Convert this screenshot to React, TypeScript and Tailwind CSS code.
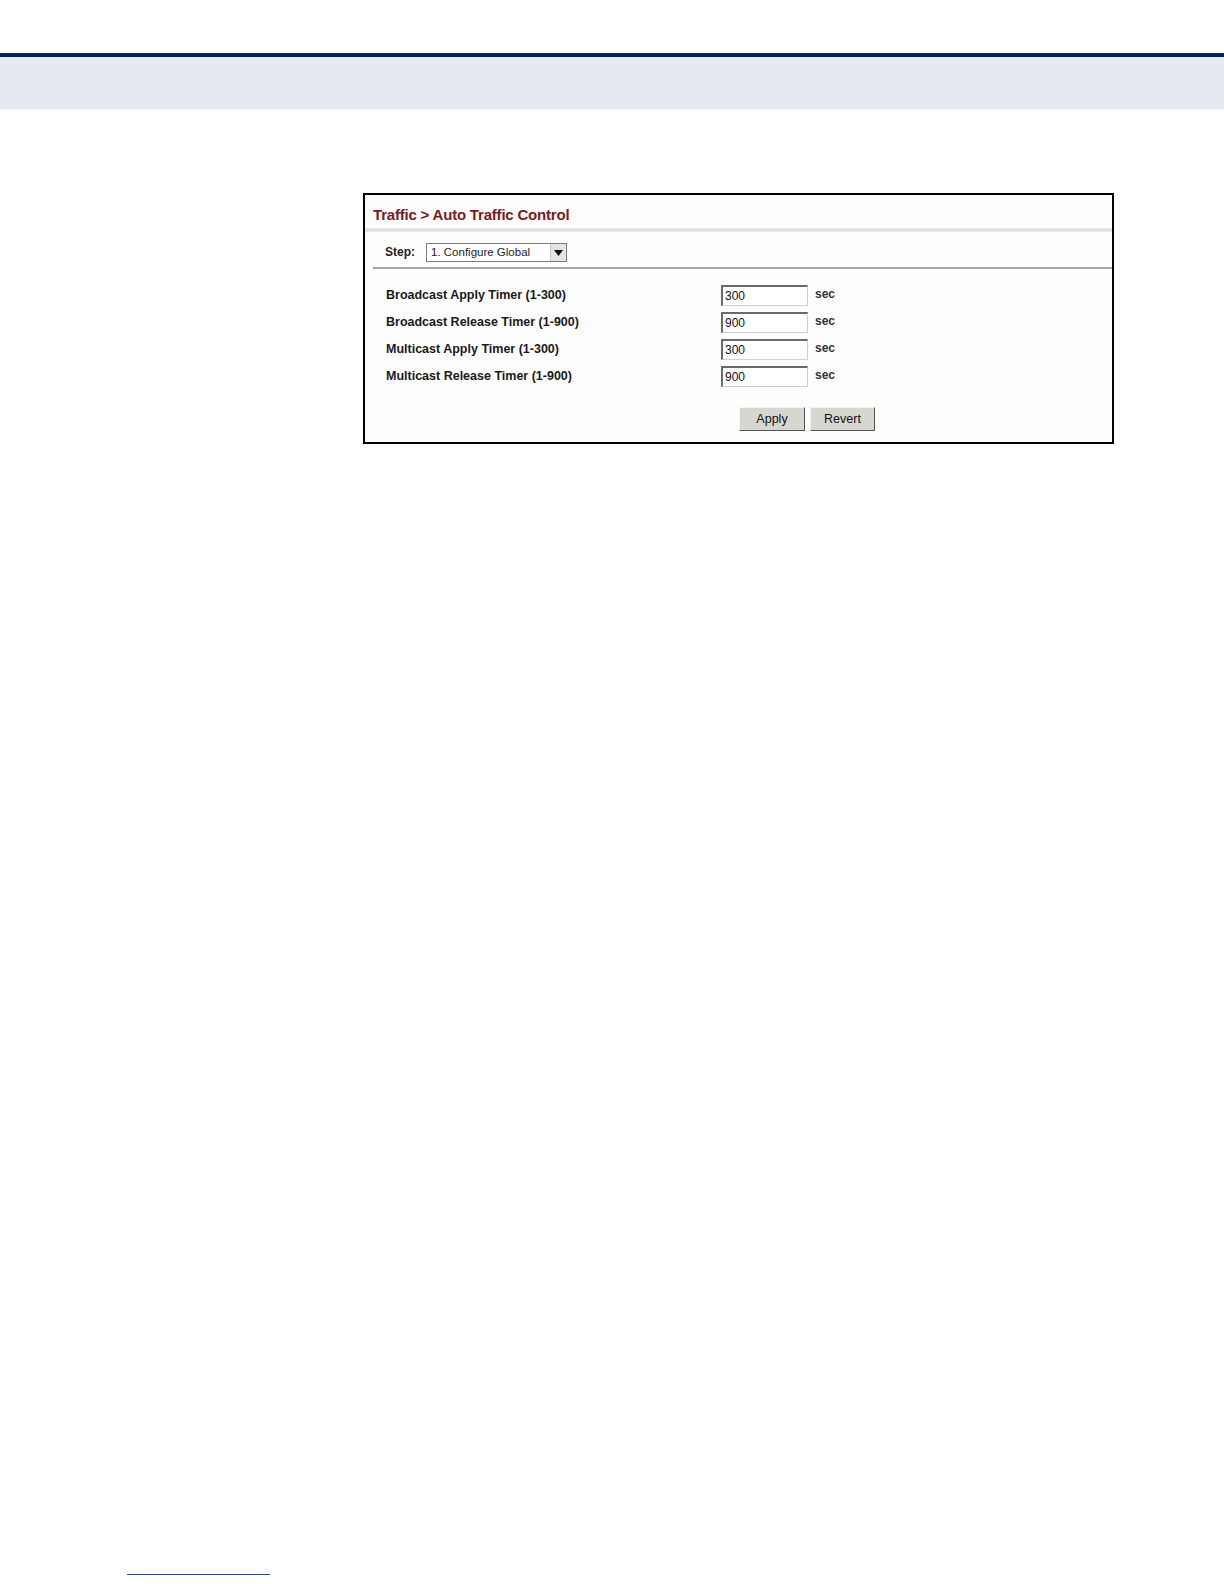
import React from 'react';

const rows = [
  { label: 'Broadcast Apply Timer (1-300)', value: '300' },
  { label: 'Broadcast Release Timer (1-900)', value: '900' },
  { label: 'Multicast Apply Timer (1-300)', value: '300' },
  { label: 'Multicast Release Timer (1-900)', value: '900' },
];

const App: React.FC = () => {
  return (
    <div className="relative w-[1224px] h-[1584px] bg-white font-['Liberation_Sans',Arial,sans-serif]">
      {/* page header */}
      <div className="pt-[53px]">
        <div className="h-[4px] bg-[#00245c]" />
        <div className="h-[52px] bg-[#e6e9f1]" />
      </div>

      {/* screenshot panel */}
      <div className="ml-[363px] mt-[84px] w-[751px] h-[251px] border-2 border-black bg-[#fdfdfd]">
        <div className="pl-[8px] pt-[11px] h-[33px] text-[15px] font-bold leading-[18px] text-[#7a1a1a] tracking-[-0.2px]">
          Traffic &gt; Auto Traffic Control
        </div>
        <div className="h-[4px] bg-gradient-to-b from-[#ececec] via-[#d8d8d8] to-[#eeeeee]" />
        <div className="ml-[8px] h-[37px] border-b-2 border-[#a8a8a8] flex items-start pl-[12px] pt-[11px]">
          <span className="text-[12px] font-bold leading-[19px] text-[#222] w-[41px]">Step:</span>
          <div className="flex items-center w-[141px] h-[19px] border border-[#7a7a7a] bg-white">
            <span className="flex-1 pl-[4px] text-[11.5px] text-[#222]">1. Configure Global</span>
            <div className="w-[16px] h-[17px] bg-[#e4e4e4] border-l border-[#c8c8c8] flex items-center justify-center">
              <svg width="9" height="6" viewBox="0 0 9 6">
                <path d="M0 0h9L4.5 6z" fill="#111" />
              </svg>
            </div>
          </div>
        </div>

        <div className="pl-[21px] pt-[16px] flex flex-col gap-[7px]">
          {rows.map((r) => (
            <div key={r.label} className="flex items-center h-[20px]">
              <span className="w-[335px] text-[12.5px] font-bold text-[#1a1a1a]">{r.label}</span>
              <div className="w-[87px] h-[21px] border-t-2 border-l-2 border-[#6a6a6a] border-r border-b border-r-[#d0d0d0] border-b-[#d0d0d0] bg-white flex items-center pl-[2px] text-[12px] text-[#111]">
                {r.value}
              </div>
              <span className="ml-[7px] text-[12px] font-bold text-[#333] -mt-[3px]">sec</span>
            </div>
          ))}
        </div>

        <div className="pl-[374px] pt-[21px] flex gap-[5px]">
          <div className="w-[66px] h-[24px] bg-[#d8d6d0] border border-[#f4f4f4] border-r-[#555] border-b-[#555] flex items-center justify-center text-[12.5px] text-[#111]">
            Apply
          </div>
          <div className="w-[65px] h-[24px] bg-[#d8d6d0] border border-[#f4f4f4] border-r-[#555] border-b-[#555] flex items-center justify-center text-[12.5px] text-[#111]">
            Revert
          </div>
        </div>
      </div>

      {/* footnote rule */}
      <div className="absolute left-[127px] top-[1574px] w-[143px] h-[1px] bg-[#2a4a8c]" />
    </div>
  );
};

export default App;
